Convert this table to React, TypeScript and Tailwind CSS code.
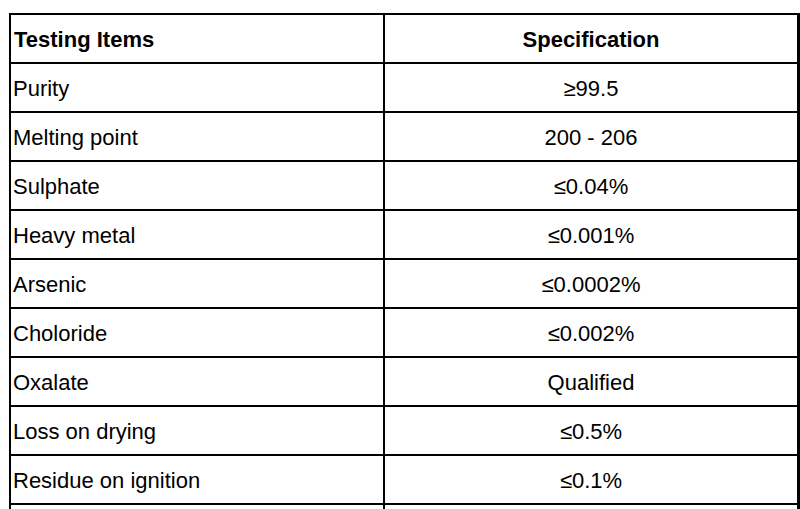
import React from "react";

const rows: [string, string][] = [
  ["Purity", "≥99.5"],
  ["Melting point", "200 - 206"],
  ["Sulphate", "≤0.04%"],
  ["Heavy metal", "≤0.001%"],
  ["Arsenic", "≤0.0002%"],
  ["Choloride", "≤0.002%"],
  ["Oxalate", "Qualified"],
  ["Loss on drying", "≤0.5%"],
  ["Residue on ignition", "≤0.1%"],
  ["", ""],
];

export default function App() {
  return (
    <div
      className="w-[800px] h-[509px] overflow-hidden bg-white pt-[13px] pl-[9px] text-black"
      style={{ fontFamily: '"Liberation Sans", Arial, sans-serif' }}
    >
      <div className="w-[791px] border-l-2 border-t-2 border-r-[3px] border-black">
        <div className="grid grid-cols-[374px_1fr] h-[49px] border-b-2 border-black text-[22px] font-bold">
          <div className="border-r-2 border-black flex items-center pl-[3px] pt-[1px]">Testing Items</div>
          <div className="flex items-center justify-center pt-[1px]">Specification</div>
        </div>
        {rows.map(([a, b], i) => (
          <div
            key={i}
            className="grid grid-cols-[374px_1fr] h-[49px] border-b-2 border-black text-[22px]"
          >
            <div className="border-r-2 border-black flex items-center pl-[2px] pt-[2px]">{a}</div>
            <div className="flex items-center justify-center pt-[2px]">{b}</div>
          </div>
        ))}
      </div>
    </div>
  );
}
